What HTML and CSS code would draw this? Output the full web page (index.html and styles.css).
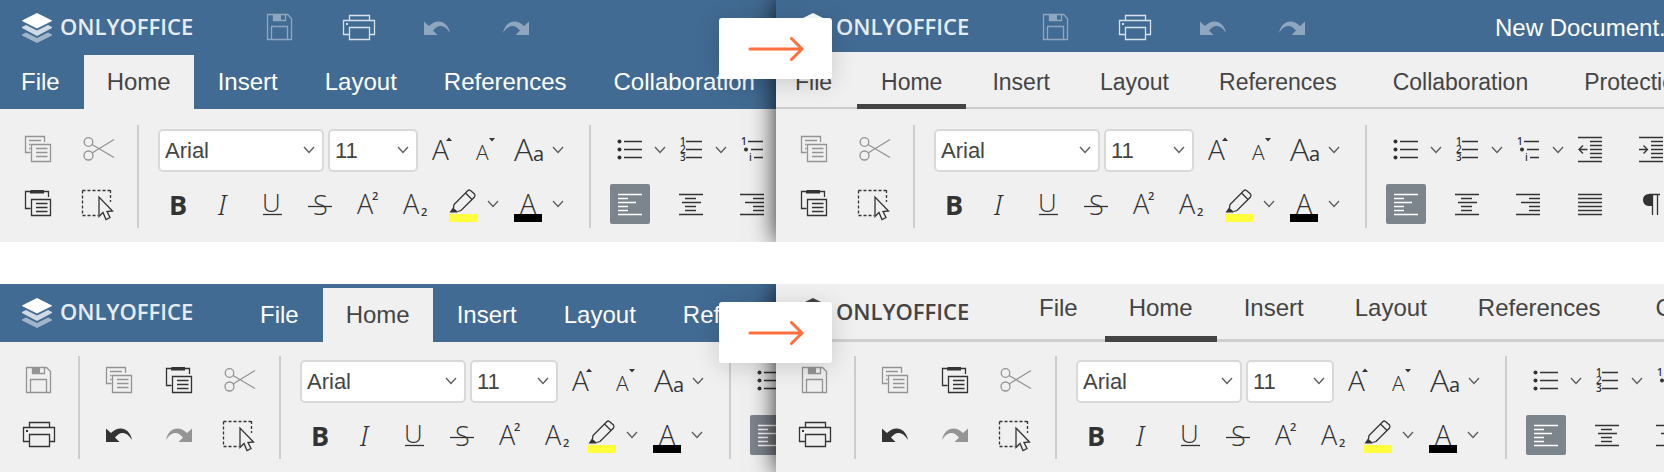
FILE: index.html
```html
<!DOCTYPE html>
<html lang="en">
<head>
<meta charset="utf-8">
<title>ONLYOFFICE toolbar comparison</title>
<link rel="stylesheet" href="styles.css">
</head>
<body>
<svg class="sprite" aria-hidden="true">
  <symbol id="logo" viewBox="0 0 30 30">
    <path d="M0 21.5L4 19.5L15 25L26 19.5L30 21.5V22.5L15 30L0 22.5Z" opacity=".5"/>
    <path d="M0 14L4 12L15 17.5L26 12L30 14V15L15 23L0 15Z" opacity=".75"/>
    <path d="M15 0L30 7.5V8L15 15.5L0 8V7.5Z"/>
  </symbol>
  <symbol id="save" viewBox="0 0 40 40">
    <path class="line" d="M8.500 6.500H28.500L32.500 10.500V31.500H8.500ZM14.500 6.500V12.500H26.500V6.500M12.500 31V18.500H28.500V31"/>
    <path d="M15 7H22V12H15Z"/>
  </symbol>
  <symbol id="print" viewBox="0 0 40 40">
    <path class="line" d="M11.500 12.500V7.500H31.500V12.500M11.500 26.500H5.500V12.500H36.500V26.500H31.500M11.500 19.500H31.500V31.500H11.500Z"/>
    <path d="M8 15H10V17H8Z"/>
  </symbol>
  <symbol id="undo" viewBox="0 0 40 40">
    <path d="M7 13.500L12 18C17 13 22 12.500 26 14.500C30 16.500 32 20 33 25C30 20.500 28 18.500 24 18C21 17.700 18.500 19.500 16 22.500L20.500 27H7Z"/>
  </symbol>
  <symbol id="redo" viewBox="0 0 40 40">
    <path d="M33 13.500L28 18C23 13 18 12.500 14 14.500C10 16.500 8 20 7 25C10 20.500 12 18.500 16 18C19 17.700 21.500 19.500 24 22.500L19.500 27H33Z"/>
  </symbol>
  <symbol id="copy" viewBox="0 0 40 40">
    <path class="line" d="M12.500 22.500H7.500V6.500H26.500V12M11 10.500H23M11 14.500H12.500M11 18.500H12.500M13.500 14.500H32.500V31.500H13.500ZM18 18.500H29.500M18 22.500H29.500M18 26.500H29.500"/>
  </symbol>
  <symbol id="paste" viewBox="0 0 40 40">
    <path class="line" d="M12.500 24.500H7.500V7.500H30.500V13M13.500 15.500H32.500V31.500H13.500ZM18 19.500H29.500M18 23.500H29.500M18 27.500H29.500"/>
    <path d="M13 6H26V9.500H12V7Z"/>
  </symbol>
  <symbol id="cut" viewBox="0 0 40 40">
    <g class="line"><circle cx="10.500" cy="12" r="4.300"/><circle cx="10.500" cy="25.500" r="4.500"/><path d="M14 14.500L36 27.500M14 23L36 9.500"/></g>
  </symbol>
  <symbol id="select" viewBox="0 0 40 40">
    <path class="line" stroke-dasharray="3 2" d="M4.500 6.500H32M32.500 6V18M4.500 6.500V31.500H20"/>
    <path class="line" d="M21 13V32.500L25 28.500L28 35.500L32 33.500L29 27.500L34.500 27Z"/>
  </symbol>
  <symbol id="chevron" viewBox="0 0 12 8"><path class="line" d="M1 1L6 6.500L11 1"/></symbol>
  <symbol id="bold" viewBox="0 0 40 40"><text class="glyph heavy" x="11" y="31" font-size="27">B</text></symbol>
  <symbol id="italic" viewBox="0 0 40 40"><text class="glyph slab" x="13" y="31" font-size="28">I</text></symbol>
  <symbol id="underline" viewBox="0 0 40 40"><text class="glyph" x="10" y="28" font-size="26">U</text><path class="line" d="M11 30.500H30"/></symbol>
  <symbol id="strike" viewBox="0 0 40 40"><text class="glyph" x="14" y="31" font-size="27">S</text><path class="line" d="M9 22.500H33"/></symbol>
  <symbol id="super" viewBox="0 0 40 40"><text class="glyph" x="11" y="29.500" font-size="27">A</text><text class="glyph mark" x="26" y="16" font-size="11">2</text></symbol>
  <symbol id="sub" viewBox="0 0 40 40"><text class="glyph" x="10" y="29.500" font-size="27">A</text><text class="glyph mark" x="28" y="32" font-size="11">2</text></symbol>
  <symbol id="grow" viewBox="0 0 40 40"><text class="glyph" x="10" y="30" font-size="28">A</text><path d="M24 11L27 7.500L30 11Z"/></symbol>
  <symbol id="shrink" viewBox="0 0 40 40"><text class="glyph" x="11" y="30" font-size="21">A</text><path d="M24 8L27 11.500L30 8Z"/></symbol>
  <symbol id="case" viewBox="0 0 40 40"><text class="glyph" x="6" y="31" font-size="32">A</text><text class="glyph regular" x="25" y="31" font-size="20">a</text></symbol>
  <symbol id="highlight" viewBox="0 0 40 40">
    <path fill="#ffff3b" d="M6 30H34V38H6Z"/>
    <path class="line" d="M10.500 24L11 20.500L25 6.500Q26 5.500 27.500 6.500L31.500 10Q32.500 11.500 31.500 13L18 26.500L14.500 27.500M22.500 9L29 15.500"/>
    <path d="M6.500 28.500L10 23.500L14.500 27.500V28.500Z"/>
  </symbol>
  <symbol id="color" viewBox="0 0 40 40"><text class="glyph" x="12" y="29.500" font-size="27">A</text><path fill="#000" d="M6 30H34V38H6Z"/></symbol>
  <symbol id="bullets" viewBox="0 0 40 40">
    <circle cx="9.500" cy="11.500" r="2"/><circle cx="9.500" cy="19.500" r="2"/><circle cx="9.500" cy="27.500" r="2"/>
    <path class="line" d="M14 11.500H32M14 19.500H32M14 27.500H32"/>
  </symbol>
  <symbol id="numbers" viewBox="0 0 40 40">
    <text class="glyph mark" x="9" y="15" font-size="10">1</text><text class="glyph mark" x="9" y="23" font-size="10">2</text><text class="glyph mark" x="9" y="31" font-size="10">3</text>
    <path class="line" d="M15 11.500H31M15 19.500H31M15 27.500H31"/>
  </symbol>
  <symbol id="levels" viewBox="0 0 40 40">
    <text class="glyph mark" x="9" y="15" font-size="10">1</text><circle cx="14" cy="19.500" r="2"/><text class="glyph mark" x="17" y="31" font-size="10">i</text>
    <path class="line" d="M16 11.500H31M19 19.500H31M22 27.500H31"/>
  </symbol>
  <symbol id="outdent" viewBox="0 0 40 40"><path class="line" d="M9 7.500H33M21 11.500H33M21 15.500H33M21 19.500H33M21 23.500H33M21 27.500H33M9 31.500H33M10 19.500H18.500M14 15.500L10 19.500L14 23.500"/></symbol>
  <symbol id="indent" viewBox="0 0 40 40"><path class="line" d="M9 7.500H33M21 11.500H33M21 15.500H33M21 19.500H33M21 23.500H33M21 27.500H33M9 31.500H33M9 19.500H17.500M13.500 15.500L17.500 19.500L13.500 23.500"/></symbol>
  <symbol id="left" viewBox="0 0 40 40"><path class="line" d="M8 10.500H32M8 14.500H18M8 18.500H26M8 22.500H18M8 26.500H18M8 30.500H32"/></symbol>
  <symbol id="center" viewBox="0 0 40 40"><path class="line" d="M8 10.500H32M14 14.500H25M11 18.500H30M14 22.500H25M14 26.500H25M8 30.500H32"/></symbol>
  <symbol id="right" viewBox="0 0 40 40"><path class="line" d="M8 10.500H32M21 14.500H32M13 18.500H32M21 22.500H32M21 26.500H32M8 30.500H32"/></symbol>
  <symbol id="justify" viewBox="0 0 40 40"><path class="line" d="M9 10.500H33M9 14.500H33M9 18.500H33M9 22.500H33M9 26.500H33M9 30.500H33"/></symbol>
  <symbol id="pilcrow" viewBox="0 0 40 40"><path d="M22 10H19Q13 10.500 13 16Q13 21.500 19 22H22Z"/><path class="line" d="M19 10.500H30M22.500 10V31M27.500 10V31"/></symbol>
  <symbol id="arrow" viewBox="0 0 56 24"><path d="M2 12H54M43.500 1.500L54 12L43.500 22.500" fill="none" stroke="#ff6f3d" stroke-width="3" stroke-linecap="round" stroke-linejoin="round"/></symbol>
</svg>

<main class="comparison">
  <section class="row">
    <div class="pane">
      <div class="editor">
        <header class="titlebar blue">
          <a class="brand" href="#"><svg class="logo"><use href="#logo"/></svg>ONLYOFFICE</a>
          <div class="quick">
            <button class="btn off" aria-label="Save"><svg class="icon"><use href="#save"/></svg></button>
            <button class="btn" aria-label="Print"><svg class="icon"><use href="#print"/></svg></button>
            <button class="btn off" aria-label="Undo"><svg class="icon"><use href="#undo"/></svg></button>
            <button class="btn off" aria-label="Redo"><svg class="icon"><use href="#redo"/></svg></button>
          </div>
        </header>
        <nav class="tabs boxed blue">
          <button class="tab">File</button><button class="tab active">Home</button><button class="tab">Insert</button><button class="tab">Layout</button><button class="tab">References</button><button class="tab">Collaboration</button>
        </nav>
        <div class="toolbar">
          <div class="group">
            <div class="line-1 wide"><button class="btn off" aria-label="Copy"><svg class="icon"><use href="#copy"/></svg></button><button class="btn off" aria-label="Cut"><svg class="icon"><use href="#cut"/></svg></button></div>
            <div class="line-2 wide"><button class="btn" aria-label="Paste"><svg class="icon"><use href="#paste"/></svg></button><button class="btn" aria-label="Select"><svg class="icon"><use href="#select"/></svg></button></div>
          </div>
          <div class="rule"></div>
          <div class="group font">
            <div class="line-1 fontline">
              <div class="combos"><span class="combo name"><select aria-label="Font"><option>Arial</option></select><svg class="chev"><use href="#chevron"/></svg></span><span class="combo size"><select aria-label="Font size"><option>11</option></select><svg class="chev"><use href="#chevron"/></svg></span></div>
              <div class="sizes"><button class="btn" aria-label="Increase size"><svg class="icon"><use href="#grow"/></svg></button><button class="btn" aria-label="Decrease size"><svg class="icon"><use href="#shrink"/></svg></button><span class="split"><button class="btn" aria-label="Change case"><svg class="icon"><use href="#case"/></svg></button><button class="more" aria-label="Case options"><svg class="chev"><use href="#chevron"/></svg></button></span></div>
            </div>
            <div class="line-2 styleline">
              <div class="styles"><button class="btn" aria-label="Bold"><svg class="icon"><use href="#bold"/></svg></button><button class="btn" aria-label="Italic"><svg class="icon"><use href="#italic"/></svg></button><button class="btn" aria-label="Underline"><svg class="icon"><use href="#underline"/></svg></button><button class="btn" aria-label="Strikethrough"><svg class="icon"><use href="#strike"/></svg></button><button class="btn" aria-label="Superscript"><svg class="icon"><use href="#super"/></svg></button><button class="btn" aria-label="Subscript"><svg class="icon"><use href="#sub"/></svg></button></div>
              <div class="colors"><span class="split"><button class="btn" aria-label="Highlight"><svg class="icon"><use href="#highlight"/></svg></button><button class="more" aria-label="Highlight colors"><svg class="chev"><use href="#chevron"/></svg></button></span><span class="split"><button class="btn" aria-label="Font color"><svg class="icon"><use href="#color"/></svg></button><button class="more" aria-label="Font colors"><svg class="chev"><use href="#chevron"/></svg></button></span></div>
            </div>
          </div>
          <div class="rule"></div>
          <div class="group">
            <div class="line-1 para"><span class="split"><button class="btn" aria-label="Bullets"><svg class="icon"><use href="#bullets"/></svg></button><button class="more" aria-label="Bullet styles"><svg class="chev"><use href="#chevron"/></svg></button></span><span class="split"><button class="btn" aria-label="Numbering"><svg class="icon"><use href="#numbers"/></svg></button><button class="more" aria-label="Numbering styles"><svg class="chev"><use href="#chevron"/></svg></button></span><span class="split"><button class="btn" aria-label="Multilevel list"><svg class="icon"><use href="#levels"/></svg></button></span></div>
            <div class="line-2 para"><button class="btn pressed" aria-label="Align left"><svg class="icon"><use href="#left"/></svg></button><button class="btn" aria-label="Align center"><svg class="icon"><use href="#center"/></svg></button><button class="btn" aria-label="Align right"><svg class="icon"><use href="#right"/></svg></button></div>
          </div>
        </div>
      </div>
    </div>
    <div class="pane front">
      <div class="editor">
        <header class="titlebar low blue">
          <a class="brand" href="#"><svg class="logo"><use href="#logo"/></svg>ONLYOFFICE</a>
          <div class="quick">
            <button class="btn off" aria-label="Save"><svg class="icon"><use href="#save"/></svg></button>
            <button class="btn" aria-label="Print"><svg class="icon"><use href="#print"/></svg></button>
            <button class="btn off" aria-label="Undo"><svg class="icon"><use href="#undo"/></svg></button>
            <button class="btn off" aria-label="Redo"><svg class="icon"><use href="#redo"/></svg></button>
          </div>
          <span class="doc">New Document.</span>
        </header>
        <nav class="tabs lined small">
          <button class="tab">File</button><button class="tab active">Home</button><button class="tab">Insert</button><button class="tab">Layout</button><button class="tab">References</button><button class="tab long">Collaboration</button><button class="tab">Protection</button>
        </nav>
        <div class="toolbar">
          <div class="group">
            <div class="line-1 wide"><button class="btn off" aria-label="Copy"><svg class="icon"><use href="#copy"/></svg></button><button class="btn off" aria-label="Cut"><svg class="icon"><use href="#cut"/></svg></button></div>
            <div class="line-2 wide"><button class="btn" aria-label="Paste"><svg class="icon"><use href="#paste"/></svg></button><button class="btn" aria-label="Select"><svg class="icon"><use href="#select"/></svg></button></div>
          </div>
          <div class="rule"></div>
          <div class="group font">
            <div class="line-1 fontline">
              <div class="combos"><span class="combo name"><select aria-label="Font"><option>Arial</option></select><svg class="chev"><use href="#chevron"/></svg></span><span class="combo size"><select aria-label="Font size"><option>11</option></select><svg class="chev"><use href="#chevron"/></svg></span></div>
              <div class="sizes"><button class="btn" aria-label="Increase size"><svg class="icon"><use href="#grow"/></svg></button><button class="btn" aria-label="Decrease size"><svg class="icon"><use href="#shrink"/></svg></button><span class="split"><button class="btn" aria-label="Change case"><svg class="icon"><use href="#case"/></svg></button><button class="more" aria-label="Case options"><svg class="chev"><use href="#chevron"/></svg></button></span></div>
            </div>
            <div class="line-2 styleline">
              <div class="styles"><button class="btn" aria-label="Bold"><svg class="icon"><use href="#bold"/></svg></button><button class="btn" aria-label="Italic"><svg class="icon"><use href="#italic"/></svg></button><button class="btn" aria-label="Underline"><svg class="icon"><use href="#underline"/></svg></button><button class="btn" aria-label="Strikethrough"><svg class="icon"><use href="#strike"/></svg></button><button class="btn" aria-label="Superscript"><svg class="icon"><use href="#super"/></svg></button><button class="btn" aria-label="Subscript"><svg class="icon"><use href="#sub"/></svg></button></div>
              <div class="colors"><span class="split"><button class="btn" aria-label="Highlight"><svg class="icon"><use href="#highlight"/></svg></button><button class="more" aria-label="Highlight colors"><svg class="chev"><use href="#chevron"/></svg></button></span><span class="split"><button class="btn" aria-label="Font color"><svg class="icon"><use href="#color"/></svg></button><button class="more" aria-label="Font colors"><svg class="chev"><use href="#chevron"/></svg></button></span></div>
            </div>
          </div>
          <div class="rule"></div>
          <div class="group">
            <div class="line-1 para"><span class="split"><button class="btn" aria-label="Bullets"><svg class="icon"><use href="#bullets"/></svg></button><button class="more" aria-label="Bullet styles"><svg class="chev"><use href="#chevron"/></svg></button></span><span class="split"><button class="btn" aria-label="Numbering"><svg class="icon"><use href="#numbers"/></svg></button><button class="more" aria-label="Numbering styles"><svg class="chev"><use href="#chevron"/></svg></button></span><span class="split"><button class="btn" aria-label="Multilevel list"><svg class="icon"><use href="#levels"/></svg></button><button class="more" aria-label="Multilevel styles"><svg class="chev"><use href="#chevron"/></svg></button></span><button class="btn" aria-label="Decrease indent"><svg class="icon"><use href="#outdent"/></svg></button><button class="btn" aria-label="Increase indent"><svg class="icon"><use href="#indent"/></svg></button></div>
            <div class="line-2 para"><button class="btn pressed" aria-label="Align left"><svg class="icon"><use href="#left"/></svg></button><button class="btn" aria-label="Align center"><svg class="icon"><use href="#center"/></svg></button><button class="btn" aria-label="Align right"><svg class="icon"><use href="#right"/></svg></button><button class="btn" aria-label="Justify"><svg class="icon"><use href="#justify"/></svg></button><button class="btn" aria-label="Nonprinting characters"><svg class="icon"><use href="#pilcrow"/></svg></button></div>
          </div>
        </div>
      </div>
      <div class="badge"><svg class="arrow"><use href="#arrow"/></svg></div>
    </div>
  </section>

  <section class="row">
    <div class="pane">
      <div class="editor">
        <header class="compact-head blue">
          <a class="brand" href="#"><svg class="logo"><use href="#logo"/></svg>ONLYOFFICE</a>
          <nav class="tabs boxed">
            <button class="tab">File</button><button class="tab active">Home</button><button class="tab">Insert</button><button class="tab">Layout</button><button class="tab">References</button>
          </nav>
        </header>
        <div class="toolbar compact">
          <div class="group">
            <div class="line-1"><button class="btn off" aria-label="Save"><svg class="icon"><use href="#save"/></svg></button></div>
            <div class="line-2"><button class="btn" aria-label="Print"><svg class="icon"><use href="#print"/></svg></button></div>
          </div>
          <div class="rule"></div>
          <div class="group">
            <div class="line-1 wide"><button class="btn off" aria-label="Copy"><svg class="icon"><use href="#copy"/></svg></button><button class="btn" aria-label="Paste"><svg class="icon"><use href="#paste"/></svg></button><button class="btn off" aria-label="Cut"><svg class="icon"><use href="#cut"/></svg></button></div>
            <div class="line-2 wide"><button class="btn" aria-label="Undo"><svg class="icon"><use href="#undo"/></svg></button><button class="btn off" aria-label="Redo"><svg class="icon"><use href="#redo"/></svg></button><button class="btn" aria-label="Select"><svg class="icon"><use href="#select"/></svg></button></div>
          </div>
          <div class="rule"></div>
          <div class="group font">
            <div class="line-1 fontline">
              <div class="combos"><span class="combo name"><select aria-label="Font"><option>Arial</option></select><svg class="chev"><use href="#chevron"/></svg></span><span class="combo size"><select aria-label="Font size"><option>11</option></select><svg class="chev"><use href="#chevron"/></svg></span></div>
              <div class="sizes"><button class="btn" aria-label="Increase size"><svg class="icon"><use href="#grow"/></svg></button><button class="btn" aria-label="Decrease size"><svg class="icon"><use href="#shrink"/></svg></button><span class="split"><button class="btn" aria-label="Change case"><svg class="icon"><use href="#case"/></svg></button><button class="more" aria-label="Case options"><svg class="chev"><use href="#chevron"/></svg></button></span></div>
            </div>
            <div class="line-2 styleline">
              <div class="styles"><button class="btn" aria-label="Bold"><svg class="icon"><use href="#bold"/></svg></button><button class="btn" aria-label="Italic"><svg class="icon"><use href="#italic"/></svg></button><button class="btn" aria-label="Underline"><svg class="icon"><use href="#underline"/></svg></button><button class="btn" aria-label="Strikethrough"><svg class="icon"><use href="#strike"/></svg></button><button class="btn" aria-label="Superscript"><svg class="icon"><use href="#super"/></svg></button><button class="btn" aria-label="Subscript"><svg class="icon"><use href="#sub"/></svg></button></div>
              <div class="colors"><span class="split"><button class="btn" aria-label="Highlight"><svg class="icon"><use href="#highlight"/></svg></button><button class="more" aria-label="Highlight colors"><svg class="chev"><use href="#chevron"/></svg></button></span><span class="split"><button class="btn" aria-label="Font color"><svg class="icon"><use href="#color"/></svg></button><button class="more" aria-label="Font colors"><svg class="chev"><use href="#chevron"/></svg></button></span></div>
            </div>
          </div>
          <div class="rule"></div>
          <div class="group">
            <div class="line-1 para"><button class="btn" aria-label="Bullets"><svg class="icon"><use href="#bullets"/></svg></button></div>
            <div class="line-2 para"><button class="btn pressed" aria-label="Align left"><svg class="icon"><use href="#left"/></svg></button></div>
          </div>
        </div>
      </div>
    </div>
    <div class="pane front">
      <div class="editor">
        <header class="compact-head plain">
          <a class="brand" href="#"><svg class="logo"><use href="#logo"/></svg>ONLYOFFICE</a>
          <nav class="tabs lined">
            <button class="tab">File</button><button class="tab active">Home</button><button class="tab">Insert</button><button class="tab">Layout</button><button class="tab">References</button><button class="tab long">Collaboration</button>
          </nav>
        </header>
        <div class="toolbar compact">
          <div class="group">
            <div class="line-1"><button class="btn off" aria-label="Save"><svg class="icon"><use href="#save"/></svg></button></div>
            <div class="line-2"><button class="btn" aria-label="Print"><svg class="icon"><use href="#print"/></svg></button></div>
          </div>
          <div class="rule"></div>
          <div class="group">
            <div class="line-1 wide"><button class="btn off" aria-label="Copy"><svg class="icon"><use href="#copy"/></svg></button><button class="btn" aria-label="Paste"><svg class="icon"><use href="#paste"/></svg></button><button class="btn off" aria-label="Cut"><svg class="icon"><use href="#cut"/></svg></button></div>
            <div class="line-2 wide"><button class="btn" aria-label="Undo"><svg class="icon"><use href="#undo"/></svg></button><button class="btn off" aria-label="Redo"><svg class="icon"><use href="#redo"/></svg></button><button class="btn" aria-label="Select"><svg class="icon"><use href="#select"/></svg></button></div>
          </div>
          <div class="rule"></div>
          <div class="group font">
            <div class="line-1 fontline">
              <div class="combos"><span class="combo name"><select aria-label="Font"><option>Arial</option></select><svg class="chev"><use href="#chevron"/></svg></span><span class="combo size"><select aria-label="Font size"><option>11</option></select><svg class="chev"><use href="#chevron"/></svg></span></div>
              <div class="sizes"><button class="btn" aria-label="Increase size"><svg class="icon"><use href="#grow"/></svg></button><button class="btn" aria-label="Decrease size"><svg class="icon"><use href="#shrink"/></svg></button><span class="split"><button class="btn" aria-label="Change case"><svg class="icon"><use href="#case"/></svg></button><button class="more" aria-label="Case options"><svg class="chev"><use href="#chevron"/></svg></button></span></div>
            </div>
            <div class="line-2 styleline">
              <div class="styles"><button class="btn" aria-label="Bold"><svg class="icon"><use href="#bold"/></svg></button><button class="btn" aria-label="Italic"><svg class="icon"><use href="#italic"/></svg></button><button class="btn" aria-label="Underline"><svg class="icon"><use href="#underline"/></svg></button><button class="btn" aria-label="Strikethrough"><svg class="icon"><use href="#strike"/></svg></button><button class="btn" aria-label="Superscript"><svg class="icon"><use href="#super"/></svg></button><button class="btn" aria-label="Subscript"><svg class="icon"><use href="#sub"/></svg></button></div>
              <div class="colors"><span class="split"><button class="btn" aria-label="Highlight"><svg class="icon"><use href="#highlight"/></svg></button><button class="more" aria-label="Highlight colors"><svg class="chev"><use href="#chevron"/></svg></button></span><span class="split"><button class="btn" aria-label="Font color"><svg class="icon"><use href="#color"/></svg></button><button class="more" aria-label="Font colors"><svg class="chev"><use href="#chevron"/></svg></button></span></div>
            </div>
          </div>
          <div class="rule"></div>
          <div class="group">
            <div class="line-1 para"><span class="split"><button class="btn" aria-label="Bullets"><svg class="icon"><use href="#bullets"/></svg></button><button class="more" aria-label="Bullet styles"><svg class="chev"><use href="#chevron"/></svg></button></span><span class="split"><button class="btn" aria-label="Numbering"><svg class="icon"><use href="#numbers"/></svg></button><button class="more" aria-label="Numbering styles"><svg class="chev"><use href="#chevron"/></svg></button></span><button class="btn" aria-label="Multilevel list"><svg class="icon"><use href="#levels"/></svg></button></div>
            <div class="line-2 para"><button class="btn pressed" aria-label="Align left"><svg class="icon"><use href="#left"/></svg></button><button class="btn" aria-label="Align center"><svg class="icon"><use href="#center"/></svg></button><button class="btn" aria-label="Align right"><svg class="icon"><use href="#right"/></svg></button></div>
          </div>
        </div>
      </div>
      <div class="badge"><svg class="arrow"><use href="#arrow"/></svg></div>
    </div>
  </section>
</main>
</body>
</html>
```

FILE: styles.css
```css
* {
  box-sizing: border-box;
}

body {
  margin: 0;
  background: #fff;
  color: #444;
  font-family: "Liberation Sans", Arial, sans-serif;
  font-size: 24px;
}

button,
select {
  margin: 0;
  padding: 0;
  border: 0;
  background: none;
  color: inherit;
  font: inherit;
}

.sprite {
  display: none;
}

.comparison {
  display: flex;
  flex-direction: column;
  gap: 42px;
}

.row {
  display: grid;
  grid-template-columns: minmax(0, 776fr) minmax(0, 888fr);
  overflow: hidden;
}

.front {
  position: relative;
  box-shadow: 0 0 24px rgba(0, 0, 0, 0.85);
}

.editor {
  height: 100%;
  overflow: hidden;
  background: #f0f0f0;
}

.blue {
  background: #426b93;
  color: #fff;
}

/* Title bar */
.titlebar {
  display: flex;
  align-items: center;
  height: 55px;
  white-space: nowrap;
}

.titlebar.low {
  height: 52px;
  padding-top: 3px;
}

.brand {
  display: flex;
  flex: none;
  align-items: flex-start;
  gap: 8px;
  width: 237px;
  padding-left: 22px;
  color: #e6ecf3;
  font: 600 22px/27px "Open Sans", sans-serif;
  text-decoration: none;
}

.logo {
  width: 30px;
  height: 30px;
  fill: #fff;
}

.plain .brand {
  color: #444;
}

.plain .logo {
  fill: #444;
}

.quick {
  display: flex;
  gap: 39px;
  padding-left: 22px;
}

.blue .btn {
  color: #d9e2ea;
}

.blue .btn.off {
  color: #8ea6be;
}

.doc {
  padding-left: 183px;
}

/* Tabs */
.tabs {
  display: flex;
}

.tab {
  flex: none;
  white-space: nowrap;
}

.boxed {
  gap: 1px;
}

.boxed .tab {
  height: 54px;
  padding: 0 23px;
}

.boxed.blue .tab:first-child {
  padding-left: 21px;
}

.boxed .active {
  background: #f0f0f0;
  color: #444;
}

.lined {
  flex: 1;
  gap: 3px;
  box-shadow: inset 0 -2px #cbcbcb;
}

.lined .tab {
  height: 58px;
  padding: 0 24px 4px;
  border-bottom: 6px solid transparent;
}

.lined .tab.long {
  padding-right: 28px;
  padding-left: 28px;
}

.lined .tab.active {
  border-color: #444;
}

.small {
  gap: 2px;
  font-size: 23px;
}

.small .tab {
  height: 57px;
  padding-top: 8px;
  padding-bottom: 0;
  border-width: 5px;
}

.small .tab:first-child {
  padding-right: 23px;
  padding-left: 19px;
}

.small .tab.long {
  padding-right: 30px;
  padding-left: 30px;
}

.compact-head {
  display: flex;
  align-items: flex-end;
  height: 58px;
}

.compact-head .brand {
  align-self: center;
}

.plain {
  box-shadow: inset 0 -3px #cfcfcf;
}

.plain .brand {
  width: 239px;
}

.plain .lined {
  box-shadow: none;
}

/* Toolbar */
.toolbar {
  display: flex;
  padding: 16px 0 14px 18px;
}

.toolbar.compact {
  padding: 14px 0 13px 18px;
}

.rule {
  flex: none;
  width: 2px;
  margin: 0 19px;
  background: #cdcdcd;
}

.compact .rule {
  margin-left: 20px;
}

.compact .font + .rule {
  margin-left: 19px;
}

.group {
  display: flex;
  flex: none;
  flex-direction: column;
  gap: 13px;
  padding: 4px 0;
}

.font {
  padding-right: 3px;
}

.line-1,
.line-2,
.combos,
.sizes,
.styles,
.colors,
.split {
  display: flex;
  align-items: center;
}

.line-1 {
  height: 42px;
}

.line-2 {
  height: 40px;
}

.wide {
  gap: 20px;
}

.fontline,
.combos {
  gap: 4px;
}

.sizes {
  gap: 3px;
}

.styles {
  gap: 7px;
}

.styleline {
  gap: 10px;
}

.colors {
  gap: 6px;
}

.compact .styleline {
  gap: 7px;
}

.para {
  display: grid;
  grid-template-columns: repeat(5, 61px);
}

.combo {
  display: grid;
  grid-template-columns: 1fr;
  align-items: center;
}

.combo select {
  grid-area: 1 / 1;
  height: 43px;
  padding: 0 5px;
  border: 2px solid #d9d9d9;
  border-radius: 5px;
  background: #fff;
  font-size: 22px;
  appearance: none;
}

.combo .chev {
  grid-area: 1 / 1;
  justify-self: end;
  margin-right: 9px;
  pointer-events: none;
}

.name {
  width: 166px;
}

.size {
  width: 90px;
}

.compact .size {
  width: 88px;
}

.btn {
  flex: none;
  width: 40px;
  height: 40px;
  border-radius: 2px;
  color: #333;
}

.btn.off {
  color: #949494;
}

.btn.pressed {
  background: #7d858c;
  color: #fff;
}

.icon {
  display: block;
  width: 40px;
  height: 40px;
  fill: currentColor;
}

.more {
  display: grid;
  place-items: center;
  flex: none;
  width: 19px;
  height: 40px;
}

.chev {
  width: 12px;
  height: 8px;
  color: #5c5c5c;
}

.line {
  fill: none;
  stroke: currentColor;
  stroke-width: 1.3px;
}

.glyph {
  font-family: "Open Sans", sans-serif;
  font-weight: 300;
}

.heavy {
  font-weight: 700;
}

.regular {
  font-weight: 400;
}

.mark {
  font-weight: 600;
}

.slab {
  font-family: "Noto Sans", sans-serif;
  font-style: italic;
}

/* Arrow card over the seam between the two panes */
.badge {
  position: absolute;
  top: 18px;
  left: -57px;
  display: grid;
  place-items: center;
  width: 113px;
  height: 61px;
  border-radius: 3px;
  background: #fff;
  box-shadow: 0 4px 24px rgba(0, 0, 0, 0.16);
}

.arrow {
  width: 58px;
  height: 24px;
}
```
